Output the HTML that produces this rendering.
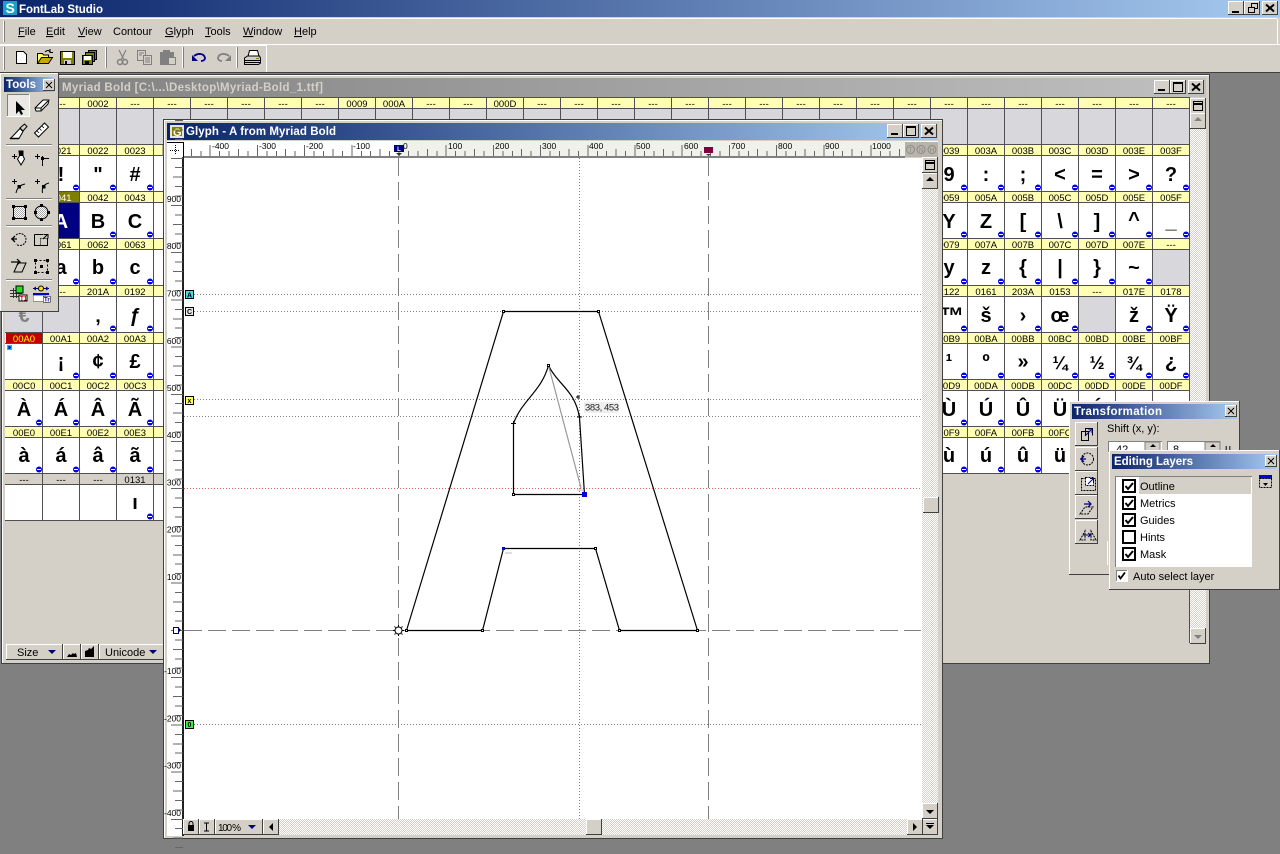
<!DOCTYPE html>
<html><head><meta charset="utf-8"><title>FontLab Studio</title>
<style>
html,body{margin:0;padding:0;background:#808080;width:1280px;height:854px;overflow:hidden}
svg{display:block;font-family:"Liberation Sans",sans-serif}
.c{shape-rendering:crispEdges}
.h text{font-size:9.5px;text-anchor:middle;fill:#000}
.g text{font-size:20px;font-weight:700;text-anchor:middle;fill:#000}
.r text{font-size:8.5px;fill:#000}
.ve text{text-anchor:end}
.m text{font-size:11px;fill:#000}
.t{font-size:11.5px;font-weight:700;fill:#fff}
.i{fill:none;stroke:#000;stroke-width:1}
</style></head><body>
<svg width="1280" height="854" viewBox="0 0 1280 854" xmlns="http://www.w3.org/2000/svg">
<defs>
<linearGradient id="ga"><stop offset="0" stop-color="#0a246a"/><stop offset="1" stop-color="#a6caf0"/></linearGradient>
<linearGradient id="gi"><stop offset="0" stop-color="#808080"/><stop offset="1" stop-color="#c0c0c0"/></linearGradient>
<pattern id="ck" width="2" height="2" patternUnits="userSpaceOnUse"><rect width="2" height="2" fill="#d4d0c8"/><rect width="1" height="1" fill="#fff"/><rect x="1" y="1" width="1" height="1" fill="#fff"/></pattern>
<pattern id="ng" width="2" height="2" patternUnits="userSpaceOnUse"><rect width="2" height="2" fill="#fff"/><rect width="1" height="1" fill="#aaa"/><rect x="1" y="1" width="1" height="1" fill="#aaa"/></pattern>
<g id="m"><circle cx="0" cy="0" r="3" fill="#0000e8"/><rect x="-2" y="-.5" width="4" height="1" fill="#fff"/></g>
<g id="ml"><use href="#m" x="76"/><use href="#m" x="113"/><use href="#m" x="150"/></g>
<g id="mr"><use href="#m" x="964"/><use href="#m" x="1001"/><use href="#m" x="1038"/><use href="#m" x="1075"/><use href="#m" x="1112"/><use href="#m" x="1149"/></g>
<g id="b15" class="c"><rect width="16" height="14" fill="#404040"/><rect width="15" height="13" fill="#fff"/><rect x="1" y="1" width="14" height="12" fill="#d4d0c8"/></g>
<g id="b16" class="c"><rect width="16" height="16" fill="#404040"/><rect width="15" height="15" fill="#fff"/><rect x="1" y="1" width="14" height="14" fill="#d4d0c8"/></g>
<g id="b23" class="c"><rect width="23" height="24" fill="#404040"/><rect width="22" height="23" fill="#fff"/><rect x="1" y="1" width="21" height="22" fill="#d4d0c8"/></g>
<g id="b11" class="c"><rect width="12" height="12" fill="#404040"/><rect width="11" height="11" fill="#fff"/><rect x="1" y="1" width="10" height="10" fill="#d4d0c8"/><path d="M3 3l6 6M9 3l-6 6" stroke="#000" fill="none" shape-rendering="auto"/></g>
<path id="xc" d="M-4-3.500L4 3.500M4-3.500L-4 3.500" stroke="#000" stroke-width="2" fill="none"/>
<path id="t5h" d="M.5 145V156M10 151V156M19.400 151V156M28.800 149V156M38.300 151V156" stroke="#666" fill="none"/>
<path id="t5v" d="M171 .5H183M175-9H183M175-18.400H183M173-27.800H183M175-37.300H183" stroke="#666" fill="none"/>
<g id="chk"><rect x="1" y="1" width="12" height="12" fill="#fff" stroke="#000" stroke-width="2"/><path d="M3.500 7l2.500 3 5-6" fill="none" stroke="#000" stroke-width="2"/></g>
<rect id="nd" x="-1" y="-1" width="2" height="2" fill="#fff" stroke="#000"/>
</defs>

<!-- app background -->
<rect width="1280" height="854" fill="#808080"/>
<rect width="1280" height="73" fill="#d4d0c8"/>
<rect y="72" width="1280" height="1" fill="#404040" class="c"/>
<rect width="1280" height="17" fill="url(#ga)"/>
<rect x="3" y="1" width="14" height="14" fill="#1a9fc8"/>
<text x="5.500" y="13" font-size="14" font-weight="700" fill="#fff">S</text>
<text x="19" y="13" class="t" font-size="12" textLength="84">FontLab Studio</text>
<use href="#b15" x="1228" y="1"/><use href="#b15" x="1244" y="1"/><use href="#b15" x="1262" y="1"/>
<rect x="1232" y="11" width="7" height="2" fill="#000"/>
<path d="M1248.500 7.500h6v5h-6zM1251.500 7V3.500h6v5h-3" fill="none" stroke="#000" class="c"/>
<use href="#xc" x="1270" y="8"/>

<!-- menu bar -->
<path class="c" d="M0 18.500H1277M1277.500 19V44.500H0" stroke="#fff" fill="none"/>
<path class="c" d="M3.500 21V42M0 44.500H1280" stroke="#fff" fill="none"/><rect x="4" y="21" width="1" height="21" fill="#808080" class="c"/>
<g class="m">
<text x="18" y="35"><tspan text-decoration="underline">F</tspan>ile</text>
<text x="46" y="35"><tspan text-decoration="underline">E</tspan>dit</text>
<text x="78" y="35"><tspan text-decoration="underline">V</tspan>iew</text>
<text x="113" y="35">Contour</text>
<text x="165" y="35"><tspan text-decoration="underline">G</tspan>lyph</text>
<text x="205" y="35"><tspan text-decoration="underline">T</tspan>ools</text>
<text x="243" y="35"><tspan text-decoration="underline">W</tspan>indow</text>
<text x="294" y="35"><tspan text-decoration="underline">H</tspan>elp</text>
</g>

<!-- toolbar -->
<path class="c" d="M0 45.500H266.500V72" stroke="#fff" fill="none"/>
<path class="c" d="M3.500 47V70M105.500 47V68M182.500 47V68M236.500 47V68" stroke="#fff" fill="none"/>
<path class="c" d="M4.500 47V70M106.500 47V68M183.500 47V68M237.500 47V68" stroke="#808080" fill="none"/>
<path d="M16.500 51.500h7l3 3v9h-10z" fill="#fff" stroke="#000"/>
<path d="M37.500 63.500v-10h5l1 1.500h5v2" fill="#ff6" stroke="#000"/><path d="M37.500 63.500l4-6h11l-4 6z" fill="#c8a800" stroke="#000"/><path d="M45 52c2-2 4-2 5 0M50 49v3.500h3" fill="none" stroke="#000"/>
<g class="c"><rect x="60.500" y="51.500" width="14" height="13" fill="#808000" stroke="#000"/><rect x="63" y="52" width="9" height="6" fill="#fff"/><rect x="64" y="60" width="7" height="4" fill="#d4d0c8"/><rect x="65" y="61" width="2" height="3" fill="#000"/>
<rect x="88.500" y="50.500" width="8" height="9" fill="#808000" stroke="#000"/><rect x="85.500" y="52.500" width="9" height="9" fill="#808000" stroke="#000"/><rect x="82.500" y="55.500" width="10" height="9" fill="#808000" stroke="#000"/><rect x="84" y="56" width="7" height="4" fill="#fff"/><rect x="85" y="61" width="4" height="3" fill="#000"/></g>
<path d="M119 50l5 10M126 50l-5 10" stroke="#808080" stroke-width="1.200" fill="none"/><circle cx="120" cy="62" r="2.500" fill="none" stroke="#808080" stroke-width="1.500"/><circle cx="125" cy="62" r="2.500" fill="none" stroke="#808080" stroke-width="1.500"/>
<g class="c" stroke="#808080" fill="#d4d0c8"><rect x="137.500" y="50.500" width="8" height="10"/><rect x="143.500" y="55.500" width="8" height="9"/><path d="M139 53h5M139 55h3M145 58h5M145 60h5M145 62h5" fill="none"/></g>
<g class="c"><rect x="160.500" y="52.500" width="13" height="12" fill="#808080" stroke="#808080"/><rect x="163" y="50" width="7" height="3" fill="#808080"/><rect x="168.500" y="57.500" width="7" height="7" fill="#d4d0c8" stroke="#808080"/></g>
<path d="M194 56c4-3 10-3 11 2 0 2-2 3-4 3" fill="none" stroke="#000080" stroke-width="1.800"/><path d="M192 55v6h6z" fill="#000080"/>
<path d="M229 56c-4-3-10-3-11 2 0 2 2 3 4 3" fill="none" stroke="#808080" stroke-width="1.800"/><path d="M231 55v6h-6z" fill="#808080"/>
<g><path d="M249.500 50.500h8l1.500 6h-11z" fill="#fff" stroke="#000"/><path d="M244.500 58l3-2h12l1 2v5l-2 1.500h-14z" fill="#d4d0c8" stroke="#000"/><path d="M245 60.500h15M245 62.500h15" stroke="#000"/><rect x="256" y="58" width="3" height="1" fill="#808000"/></g>

<!-- FONT WINDOW -->
<rect x="1" y="74" width="1209" height="590" fill="#404040" class="c"/>
<rect x="2" y="75" width="1207" height="588" fill="#fff" class="c"/>
<rect x="3" y="76" width="1206" height="587" fill="#d4d0c8" class="c"/>
<rect x="1" y="663" width="1209" height="1" fill="#404040" class="c"/>
<rect x="5" y="78" width="1201" height="19" fill="url(#gi)"/>
<text x="62" y="91" class="t" font-size="12" style="fill:#d4d0c8" textLength="261">Myriad Bold [C:\...\Desktop\Myriad-Bold_1.ttf]</text>
<use href="#b15" x="1154" y="80"/><use href="#b15" x="1170" y="80"/><use href="#b15" x="1188" y="80"/>
<rect x="1158" y="89" width="7" height="2" fill="#000" class="c"/>
<rect x="1173.500" y="82.500" width="9" height="9" fill="none" stroke="#000" class="c"/><rect x="1173" y="82" width="10" height="2" class="c"/>
<use href="#xc" x="1196" y="87"/>

<!-- grid fills -->
<g class="c">
<rect x="5" y="97" width="1185" height="377" fill="#fff"/>
<rect x="5" y="474" width="185" height="47" fill="#fff"/>
<rect x="5" y="98" width="1185" height="10" fill="#ffffb4"/>
<rect x="5" y="145" width="1185" height="10" fill="#ffffb4"/>
<rect x="5" y="192" width="1185" height="10" fill="#ffffb4"/>
<rect x="5" y="239" width="1185" height="10" fill="#ffffb4"/>
<rect x="5" y="286" width="1185" height="10" fill="#ffffb4"/>
<rect x="5" y="333" width="1185" height="10" fill="#ffffb4"/>
<rect x="5" y="380" width="1185" height="10" fill="#ffffb4"/>
<rect x="5" y="427" width="1185" height="10" fill="#ffffb4"/>
<rect x="5" y="474" width="185" height="10" fill="#d4d0c8"/>
<rect x="5" y="109" width="1185" height="35" fill="#d8d8dc"/>
<rect x="5" y="296" width="74" height="36" fill="#d8d8dc"/>
<rect x="1079" y="296" width="36" height="36" fill="#d8d8dc"/>
<rect x="1153" y="249" width="36" height="36" fill="#d8d8dc"/>
<rect x="43" y="203" width="36" height="35" fill="#000080"/>
<rect x="43" y="192" width="36" height="10" fill="#808000"/>
<rect x="6" y="333" width="36" height="10" fill="#c00000"/>
<rect x="7" y="345" width="5" height="5" fill="#00c8ff"/>
<path d="M8.500 346v3h1.500l1-1.500-1-1.500z" fill="#0000c0"/>
<path stroke="#505050" fill="none" d="M5 97.500H1190M5 108.500H1190M5 144.500H1190M5 155.500H1190M5 191.500H1190M5 202.500H1190M5 238.500H1190M5 249.500H1190M5 285.500H1190M5 296.500H1190M5 332.500H1190M5 343.500H1190M5 379.500H1190M5 390.500H1190M5 426.500H1190M5 437.500H1190M5 473.500H190M5 484.500H190M5 520.500H190M930 473.500H1190
M42.500 97V521M79.500 97V521M116.500 97V521M153.500 97V521M190.500 97V521M227.500 97V144M264.500 97V144M301.500 97V144M338.500 97V144M375.500 97V144M412.500 97V144M449.500 97V144M486.500 97V144M523.500 97V144M560.500 97V144M597.500 97V144M634.500 97V144M671.500 97V144M708.500 97V144M745.500 97V144M782.500 97V144M819.500 97V144M856.500 97V144M893.500 97V144M930.500 97V474M967.500 97V474M1004.500 97V474M1041.500 97V474M1078.500 97V474M1115.500 97V474M1152.500 97V474M1189.500 97V474"/>
</g>
<rect x="190" y="474" width="740" height="48" fill="#d4d0c8" class="c"/>
<rect x="967" y="474" width="240" height="60" fill="#d4d0c8" class="c"/>
<rect x="1189" y="473" width="1" height="1" fill="#505050" class="c"/>

<!-- header labels -->
<g class="h">
<text x="61" y="107">---</text><text x="98" y="107">0002</text><text x="135" y="107">---</text><text x="172" y="107">---</text><text x="209" y="107">---</text><text x="246" y="107">---</text><text x="283" y="107">---</text><text x="320" y="107">---</text><text x="357" y="107">0009</text><text x="394" y="107">000A</text><text x="431" y="107">---</text><text x="468" y="107">---</text><text x="505" y="107">000D</text><text x="542" y="107">---</text><text x="579" y="107">---</text><text x="616" y="107">---</text><text x="653" y="107">---</text><text x="690" y="107">---</text><text x="727" y="107">---</text><text x="764" y="107">---</text><text x="801" y="107">---</text><text x="838" y="107">---</text><text x="875" y="107">---</text><text x="912" y="107">---</text><text x="949" y="107">---</text><text x="986" y="107">---</text><text x="1023" y="107">---</text><text x="1060" y="107">---</text><text x="1097" y="107">---</text><text x="1134" y="107">---</text><text x="1171" y="107">---</text>
<text x="61" y="154">0021</text><text x="98" y="154">0022</text><text x="135" y="154">0023</text><text x="949" y="154">0039</text><text x="986" y="154">003A</text><text x="1023" y="154">003B</text><text x="1060" y="154">003C</text><text x="1097" y="154">003D</text><text x="1134" y="154">003E</text><text x="1171" y="154">003F</text>
<text x="61" y="201" style="fill:#fff">0041</text><text x="98" y="201">0042</text><text x="135" y="201">0043</text><text x="949" y="201">0059</text><text x="986" y="201">005A</text><text x="1023" y="201">005B</text><text x="1060" y="201">005C</text><text x="1097" y="201">005D</text><text x="1134" y="201">005E</text><text x="1171" y="201">005F</text>
<text x="61" y="248">0061</text><text x="98" y="248">0062</text><text x="135" y="248">0063</text><text x="949" y="248">0079</text><text x="986" y="248">007A</text><text x="1023" y="248">007B</text><text x="1060" y="248">007C</text><text x="1097" y="248">007D</text><text x="1134" y="248">007E</text><text x="1171" y="248">---</text>
<text x="61" y="295">---</text><text x="98" y="295">201A</text><text x="135" y="295">0192</text><text x="949" y="295">2122</text><text x="986" y="295">0161</text><text x="1023" y="295">203A</text><text x="1060" y="295">0153</text><text x="1097" y="295">---</text><text x="1134" y="295">017E</text><text x="1171" y="295">0178</text>
<text x="24" y="342" style="fill:#ffff00">00A0</text><text x="61" y="342">00A1</text><text x="98" y="342">00A2</text><text x="135" y="342">00A3</text><text x="949" y="342">00B9</text><text x="986" y="342">00BA</text><text x="1023" y="342">00BB</text><text x="1060" y="342">00BC</text><text x="1097" y="342">00BD</text><text x="1134" y="342">00BE</text><text x="1171" y="342">00BF</text>
<text x="24" y="389">00C0</text><text x="61" y="389">00C1</text><text x="98" y="389">00C2</text><text x="135" y="389">00C3</text><text x="949" y="389">00D9</text><text x="986" y="389">00DA</text><text x="1023" y="389">00DB</text><text x="1060" y="389">00DC</text><text x="1097" y="389">00DD</text><text x="1134" y="389">00DE</text><text x="1171" y="389">00DF</text>
<text x="24" y="436">00E0</text><text x="61" y="436">00E1</text><text x="98" y="436">00E2</text><text x="135" y="436">00E3</text><text x="949" y="436">00F9</text><text x="986" y="436">00FA</text><text x="1023" y="436">00FB</text><text x="1060" y="436">00FC</text>
<text x="24" y="483">---</text><text x="61" y="483">---</text><text x="98" y="483">---</text><text x="135" y="483">0131</text>
</g>

<!-- glyphs -->
<g class="g">
<text x="61" y="181">!</text><text x="98" y="181">"</text><text x="135" y="181">#</text><text x="949" y="181">9</text><text x="986" y="181">:</text><text x="1023" y="181">;</text><text x="1060" y="181">&lt;</text><text x="1097" y="181">=</text><text x="1134" y="181">&gt;</text><text x="1171" y="181">?</text>
<text x="61" y="228" style="fill:#fff">A</text><text x="98" y="228">B</text><text x="135" y="228">C</text><text x="949" y="228">Y</text><text x="986" y="228">Z</text><text x="1023" y="228">[</text><text x="1060" y="228">\</text><text x="1097" y="228">]</text><text x="1134" y="226">^</text><text x="1171" y="228">_</text>
<text x="61" y="274">a</text><text x="98" y="274">b</text><text x="135" y="274">c</text><text x="949" y="274">y</text><text x="986" y="274">z</text><text x="1023" y="274">{</text><text x="1060" y="274">|</text><text x="1097" y="274">}</text><text x="1134" y="274">~</text>
<text x="24" y="322" style="fill:#808080">€</text><text x="98" y="322">‚</text><text x="135" y="322">ƒ</text><text x="952" y="324" style="font-size:24px">™</text><text x="986" y="322">š</text><text x="1023" y="322">›</text><text x="1060" y="322">œ</text><text x="1134" y="322">ž</text><text x="1171" y="322">Ÿ</text>
<text x="61" y="368">¡</text><text x="98" y="368">¢</text><text x="135" y="368">£</text><text x="949" y="368">¹</text><text x="986" y="368">º</text><text x="1023" y="368">»</text><text x="1060" y="369" style="font-size:18px">¼</text><text x="1097" y="369" style="font-size:18px">½</text><text x="1134" y="369" style="font-size:18px">¾</text><text x="1171" y="368">¿</text>
<text x="24" y="416">À</text><text x="61" y="416">Á</text><text x="98" y="416">Â</text><text x="135" y="416">Ã</text><text x="949" y="416">Ù</text><text x="986" y="416">Ú</text><text x="1023" y="416">Û</text><text x="1060" y="416">Ü</text><text x="1097" y="416">Ý</text><text x="1171" y="416">ß</text>
<text x="24" y="462">à</text><text x="61" y="462">á</text><text x="98" y="462">â</text><text x="135" y="462">ã</text><text x="949" y="462">ù</text><text x="986" y="462">ú</text><text x="1023" y="462">û</text><text x="1060" y="462">ü</text>
<text x="135" y="509">ı</text>
</g>

<!-- markers -->
<use href="#ml" y="187.500"/><use href="#mr" y="187.500"/><use href="#m" x="1186" y="187.500"/>
<use href="#m" x="113" y="234.500"/><use href="#m" x="150" y="234.500"/><use href="#mr" y="234.500"/><use href="#m" x="1186" y="234.500"/>
<use href="#ml" y="281.500"/><use href="#mr" y="281.500"/>
<use href="#m" x="113" y="328.500"/><use href="#m" x="150" y="328.500"/><use href="#m" x="964" y="328.500"/><use href="#m" x="1001" y="328.500"/><use href="#m" x="1038" y="328.500"/><use href="#m" x="1075" y="328.500"/><use href="#m" x="1149" y="328.500"/><use href="#m" x="1186" y="328.500"/>
<use href="#ml" y="375.500"/><use href="#mr" y="375.500"/><use href="#m" x="1186" y="375.500"/>
<use href="#m" x="39" y="422.500"/><use href="#ml" y="422.500"/><use href="#mr" y="422.500"/>
<use href="#m" x="39" y="469.500"/><use href="#ml" y="469.500"/><use href="#m" x="964" y="469.500"/><use href="#m" x="1001" y="469.500"/><use href="#m" x="1038" y="469.500"/>
<use href="#m" x="150" y="516.500"/>

<!-- font window scrollbar -->
<rect x="1190" y="98" width="16" height="545" fill="url(#ck)" class="c"/>
<rect x="1189" y="97" width="1" height="546" fill="#505050" class="c"/>
<use href="#b16" x="1190" y="98"/><rect x="1193.500" y="101.500" width="9" height="9" fill="none" stroke="#000" class="c"/><rect x="1194" y="103" width="8" height="2" class="c"/>
<use href="#b16" x="1190" y="113"/><path d="M1198 117l-4 4h8z" fill="#808080"/>
<use href="#b16" x="1190" y="628"/><path d="M1198 639l-4-4h8z" fill="#808080"/>

<!-- font window bottom bar -->
<g class="c">
<rect x="6" y="644" width="57" height="16" fill="#404040"/><rect x="6" y="644" width="56" height="15" fill="#fff"/><rect x="7" y="645" width="55" height="14" fill="#d4d0c8"/>
<rect x="63" y="644" width="18" height="16" fill="#404040"/><rect x="63" y="644" width="17" height="15" fill="#fff"/><rect x="64" y="645" width="16" height="14" fill="#d4d0c8"/>
<rect x="81" y="644" width="18" height="16" fill="#404040"/><rect x="81" y="644" width="17" height="15" fill="#fff"/><rect x="82" y="645" width="16" height="14" fill="#d4d0c8"/>
<rect x="99" y="644" width="66" height="16" fill="#404040"/><rect x="99" y="644" width="65" height="15" fill="#fff"/><rect x="100" y="645" width="64" height="14" fill="#d4d0c8"/>
</g>
<text x="17" y="656" font-size="11" fill="#000">Size</text><path d="M48 650h8l-4 4z" fill="#000080"/>
<path d="M67 657l2-3 2 1 2-2 1 1 2-1 1 4z" fill="#000"/><path d="M85 657v-6l3-1 1-2 2 1 3-3v11z" fill="#000"/>
<text x="105" y="656" font-size="11" fill="#000">Unicode</text><path d="M149 650h8l-4 4z" fill="#000080"/>

<!-- GLYPH WINDOW -->
<rect x="163" y="119" width="780" height="720" fill="#404040" class="c"/>
<rect x="164" y="120" width="778" height="718" fill="#fff" class="c"/>
<rect x="165" y="121" width="777" height="717" fill="#d4d0c8" class="c"/>
<rect x="167" y="123" width="771" height="17" fill="url(#ga)"/>
<g class="c"><rect x="170" y="125" width="14" height="13" fill="#e8e4d8"/><rect x="172" y="127" width="10" height="9" fill="#808000"/></g>
<text x="173" y="136" font-size="11" font-weight="700" fill="#fff">G</text>
<text x="186" y="135" class="t" font-size="12" textLength="150">Glyph - A from Myriad Bold</text>
<use href="#b15" x="887" y="124"/><use href="#b15" x="903" y="124"/><use href="#b15" x="921" y="124"/>
<rect x="891" y="133" width="7" height="2" fill="#000" class="c"/>
<rect x="906.500" y="126.500" width="9" height="9" fill="none" stroke="#000" class="c"/><rect x="906" y="126" width="10" height="2" class="c"/>
<use href="#xc" x="929" y="131"/>

<!-- canvas & rulers -->
<rect x="184" y="158" width="738" height="661" fill="#fff" class="c"/>
<rect x="167" y="141" width="771" height="16" fill="#fff" class="c"/>
<rect x="399" y="141" width="506" height="15" fill="#f1f1ec" class="c"/>
<rect x="167" y="157" width="16" height="679" fill="#fff" class="c"/>
<rect x="183" y="156" width="722" height="2" fill="#808080" class="c"/>
<rect x="182" y="142" width="2" height="694" fill="#202020" class="c"/>
<g class="c">
<use href="#t5h" x="162.500"/><use href="#t5h" x="209.700"/><use href="#t5h" x="256.900"/><use href="#t5h" x="304.100"/><use href="#t5h" x="351.300"/><use href="#t5h" x="398.500"/><use href="#t5h" x="445.700"/><use href="#t5h" x="492.900"/><use href="#t5h" x="540.100"/><use href="#t5h" x="587.300"/><use href="#t5h" x="634.500"/><use href="#t5h" x="681.700"/><use href="#t5h" x="728.900"/><use href="#t5h" x="776.100"/><use href="#t5h" x="823.300"/><use href="#t5h" x="870.500"/>
<use href="#t5v" y="158"/><use href="#t5v" y="205"/><use href="#t5v" y="252.200"/><use href="#t5v" y="299.400"/><use href="#t5v" y="346.600"/><use href="#t5v" y="393.800"/><use href="#t5v" y="441"/><use href="#t5v" y="488.200"/><use href="#t5v" y="535.400"/><use href="#t5v" y="582.600"/><use href="#t5v" y="630"/><use href="#t5v" y="677.200"/><use href="#t5v" y="724.400"/><use href="#t5v" y="771.600"/><use href="#t5v" y="818.800"/><use href="#t5v" y="866"/>
</g>
<rect x="167" y="142" width="16" height="15" fill="#fff" class="c"/>
<path class="c" d="M167 142.500H183.500V157" stroke="#000" fill="none"/>
<path class="c" d="M175.500 145V155M170 150.500H180" stroke="#000" stroke-dasharray="1 1" fill="none"/>
<g class="r">
<text x="212" y="149">-400</text><text x="259" y="149">-300</text><text x="306" y="149">-200</text><text x="353" y="149">-100</text><text x="403" y="149">0</text><text x="448" y="149">100</text><text x="495" y="149">200</text><text x="542" y="149">300</text><text x="589" y="149">400</text><text x="636" y="149">500</text><text x="684" y="149">600</text><text x="731" y="149">700</text><text x="778" y="149">800</text><text x="825" y="149">900</text><text x="872" y="149">1000</text>
</g>
<g class="r ve">
<text x="181" y="202">900</text><text x="181" y="249">800</text><text x="181" y="296.500">700</text><text x="181" y="344">600</text><text x="181" y="391">500</text><text x="181" y="438">400</text><text x="181" y="485.500">300</text><text x="181" y="532.500">200</text><text x="181" y="580">100</text><text x="181" y="674">-100</text><text x="181" y="721.500">-200</text><text x="181" y="768.500">-300</text><text x="181" y="816">-400</text>
</g>
<rect x="905" y="142" width="33" height="15" fill="#b8b4ac" class="c"/>
<g fill="none" stroke="#8a8a82"><circle cx="910.500" cy="149.500" r="4"/><circle cx="921" cy="149.500" r="4"/><circle cx="932" cy="149.500" r="4"/></g>
<g font-size="6" fill="#8a8a82" text-anchor="middle"><text x="910.500" y="152">T</text><text x="921" y="152">N</text><text x="932" y="152">H</text></g>
<rect x="394" y="145" width="10" height="7" fill="#000080" class="c"/><text x="399" y="151" font-size="6" font-weight="700" fill="#fff" text-anchor="middle">L</text><path d="M396 153h6l-3 3z" fill="#333"/>
<rect x="704" y="147" width="9" height="6" fill="#800040" class="c"/><path d="M706 154h5l-2.500 2z" fill="#333"/>

<!-- guides -->
<g class="c" fill="none" stroke="#808080" stroke-dasharray="1 2">
<path d="M194 294.500H921M194 311.500H921M194 399.500H921M184 416.500H921M194 724.500H921M579.500 158V819"/>
<path d="M184 488.500H921" stroke="#e06060"/>
</g>
<path class="c" d="M398.500 158V819M708.500 158V819M184 630.500H921" stroke="#808080" stroke-dasharray="18 6" fill="none"/>

<!-- contours -->
<path d="M406.500 630.500L503.500 311.500H598.500L697.500 630.500H619.500L595.500 548.500H503.500L482.500 630.500Z" fill="none" stroke="#000" stroke-width="1.200"/>
<path d="M548.500 365.500C541 392 522 400 513.500 423.500V494.500H584.500L579.500 417.500C575 390 558 385 548.500 365.500Z" fill="none" stroke="#000" stroke-width="1.200"/>
<path d="M548.500 365.500L581 488" stroke="#999" stroke-width="1.200" fill="none"/>
<path d="M577 490h6" stroke="#bbb" fill="none"/>
<path d="M505 553h7" stroke="#bbb" fill="none"/>
<path d="M576 397h4M578 395v4M577 417h5M579.500 414.500v5M511 423.500h5M513.500 421v5" stroke="#000" fill="none" class="c"/>
<g class="c">
<use href="#nd" x="503.500" y="311.500"/><use href="#nd" x="598.500" y="311.500"/><use href="#nd" x="548.500" y="365.500"/><use href="#nd" x="513.500" y="494.500"/><use href="#nd" x="406.500" y="630.500"/><use href="#nd" x="482.500" y="630.500"/><use href="#nd" x="619.500" y="630.500"/><use href="#nd" x="697.500" y="630.500"/><use href="#nd" x="595.500" y="548.500"/>
<rect x="502" y="547" width="3" height="3" fill="#0000e0"/><rect x="582" y="492" width="5" height="5" fill="#0000e0"/>
</g>
<rect x="584" y="402" width="35" height="11" fill="#eee"/>
<text x="585" y="410.500" font-size="9.500" fill="#222" textLength="34">383, 453</text>
<circle cx="398.500" cy="630.500" r="3.500" fill="#fff" stroke="#000"/><path d="M393 630.500h2M402 630.500h2M398.500 625v2M398.500 634v2M394.500 626.500l1 1M402.500 626.500l-1 1M394.500 634.500l1-1M402.500 634.500l-1-1" stroke="#000" fill="none"/>

<!-- guide markers -->
<g class="c">
<rect x="185.500" y="290.500" width="8" height="8" fill="#40e0e0" stroke="#000"/>
<rect x="185.500" y="307.500" width="8" height="8" fill="#e8e8e8" stroke="#000"/>
<rect x="185.500" y="396.500" width="8" height="8" fill="#ffff60" stroke="#000"/>
<rect x="185.500" y="720.500" width="8" height="8" fill="#40f040" stroke="#000"/>
<rect x="173.500" y="627.500" width="5" height="6" fill="#fff" stroke="#000080"/>
</g>
<path d="M179 628l2 2-2 2z" fill="#000"/>
<g font-size="7" font-weight="700" fill="#000" text-anchor="middle"><text x="189.500" y="297.500">A</text><text x="189.500" y="314">C</text><text x="189.500" y="403">x</text><text x="189.500" y="727">0</text></g>

<!-- glyph window scrollbars -->
<rect x="922" y="157" width="16" height="662" fill="url(#ck)" class="c"/>
<use href="#b16" x="922" y="157"/><rect x="925.500" y="160.500" width="9" height="9" fill="none" stroke="#000" class="c"/><rect x="926" y="162" width="8" height="2" class="c"/>
<use href="#b16" x="922" y="173"/><path d="M930 177l-4 4h8z" fill="#000"/>
<use href="#b16" x="923" y="497"/>
<use href="#b16" x="922" y="803"/><path d="M930 814l-4-4h8z" fill="#000"/>
<use href="#b16" x="922" y="819"/><path d="M930 829l-4-4h8z" fill="#000"/><rect x="926" y="823" width="8" height="1" fill="#000"/>
<rect x="278" y="819" width="630" height="16" fill="url(#ck)" class="c"/>
<use href="#b16" x="183" y="819"/><use href="#b16" x="199" y="819"/>
<g class="c"><rect x="215" y="819" width="48" height="16" fill="#404040"/><rect x="215" y="819" width="47" height="15" fill="#fff"/><rect x="216" y="820" width="46" height="14" fill="#d4d0c8"/></g>
<use href="#b16" x="263" y="819"/>
<use href="#b16" x="586" y="819"/>
<use href="#b16" x="907" y="819"/>
<path d="M188 825h6v6h-6z" fill="#000"/><path d="M189 825v-1.500a2 2 0 0 1 4 0V825" fill="none" stroke="#000"/>
<path d="M204 823h5M204 831h5M206.500 823v8" fill="none" stroke="#000" class="c"/>
<text x="218" y="831" font-size="10" fill="#000" textLength="23">100 %</text><path d="M248 825h8l-4 4z" fill="#000080"/>
<path d="M273 823v8l-4-4z" fill="#000"/><path d="M913 823v8l4-4z" fill="#000"/>

<!-- TOOLS PALETTE -->
<rect x="0" y="73" width="59" height="239" fill="#404040" class="c"/>
<rect x="0" y="73" width="58" height="238" fill="#fff" class="c"/>
<rect x="1" y="74" width="57" height="237" fill="#d4d0c8" class="c"/>
<rect x="4" y="77" width="50" height="15" fill="url(#ga)"/>
<text x="6" y="88" class="t" font-size="12" textLength="30">Tools</text>
<use href="#b11" x="43" y="79"/>
<path class="c" d="M6 145.500H52M6 199.500H52M6 226.500H52M6 280.500H52" stroke="#fff" fill="none"/>
<path class="c" d="M6 144.500H52M6 198.500H52M6 225.500H52M6 279.500H52" stroke="#808080" fill="none"/>
<!-- arrow -->
<g class="c"><rect x="7" y="94" width="23" height="23" fill="#fff"/><rect x="7" y="94" width="22" height="22" fill="#808080"/><rect x="8" y="95" width="21" height="21" fill="#ebe9e5"/></g>
<path d="M16 101v13l3-3 2 4 2-1-2-4h4z" fill="#000"/>
<!-- eraser -->
<path d="M35 108l8-8h6l-1 4-7 7h-5z" fill="#fff" stroke="#000"/><path d="M35 108h6l7-7M41 108v3" fill="none" stroke="#000"/>
<!-- knife -->
<path d="M10.500 138.500L20 128.500L23 131.500L19 138.500Z" fill="#fff" stroke="#000"/><path d="M20 128L24.500 124L27 126.500L23 131Z" fill="none" stroke="#000"/><path d="M10 138.500h9" stroke="#000" stroke-width="1.500"/>
<!-- ruler -->
<path d="M34.500 133l10-10 4 4-10 10z" fill="#fff" stroke="#000"/><path d="M37 131l2 2M39.500 128.500l2 2M42 126l2 2" stroke="#000" stroke-width=".8" fill="none"/>
<!-- add node tools -->
<path d="M12 156.500h5M14.500 154v5M35 156.500h5M37.500 154v5" stroke="#000" fill="none" class="c"/>
<path d="M19 151h4v5l1.500 3-3.500 6-3.500-6 2-3z" fill="#fff" stroke="#000"/><rect x="19" y="151" width="4" height="5"/>
<path d="M42 158.500h7M42.500 156v10" stroke="#000" fill="none" class="c"/><rect x="41" y="157" width="3" height="3" class="c"/>
<path d="M12 181.500h5M14.500 179v5M35 181.500h5M37.500 179v5" stroke="#000" fill="none" class="c"/>
<path d="M16 193c1-5 4-8 9-9" fill="none" stroke="#000"/><rect x="17.500" y="185" width="3.500" height="3.500"/>
<path d="M42.500 193c-1-6 2-9 6.500-10" fill="none" stroke="#000"/><rect x="42" y="185" width="3.500" height="3.500"/>
<!-- rect / circle shapes -->
<g class="c"><rect x="13.500" y="206.500" width="12" height="12" fill="url(#ng)" stroke="#000"/><rect x="12" y="205" width="3" height="3"/><rect x="24" y="205" width="3" height="3"/><rect x="12" y="217" width="3" height="3"/><rect x="24" y="217" width="3" height="3"/></g>
<circle cx="41.500" cy="212.500" r="6.500" fill="url(#ng)" stroke="#000"/><g class="c"><rect x="40" y="204" width="3" height="3"/><rect x="40" y="218" width="3" height="3"/><rect x="34" y="211" width="3" height="3"/><rect x="47" y="211" width="3" height="3"/></g>
<!-- rotate / scale -->
<path d="M16 235a6 6 0 1 1 0 9" fill="none" stroke="#000" stroke-dasharray="2 1"/><path d="M11 239h6M15 236l-3 3 3 3" fill="none" stroke="#000" stroke-width="1.300"/>
<path class="c" d="M34.500 234.500h9M34.500 234.500v11h13v-7" fill="none" stroke="#000"/><path class="c" d="M40.500 238.500h7M40.500 238.500v7" fill="none" stroke="#000" stroke-dasharray="1 1"/><path d="M43 239l4-4M44 234.500h4v4" fill="none" stroke="#000"/>
<!-- skew / transform box -->
<path d="M14 272l4-9h8l-4 9z" fill="none" stroke="#000"/><path d="M11 262h8M17 259l3 3-3 3" fill="none" stroke="#000" stroke-width="1.200"/>
<rect x="35.500" y="260.500" width="12" height="12" fill="none" stroke="#000" stroke-dasharray="2 2" class="c"/><g class="c"><rect x="34" y="259" width="3" height="3"/><rect x="46" y="259" width="3" height="3"/><rect x="34" y="271" width="3" height="3"/><rect x="46" y="271" width="3" height="3"/><rect x="40" y="265" width="3" height="3"/></g>
<!-- T1 grid / metrics -->
<g class="c"><path d="M10 290.500h12M10 293.500h12M10 296.500h12M13.500 288v10M16.500 288v10" stroke="#333" fill="none"/><rect x="16" y="286" width="7" height="7" fill="#20e020" stroke="#000" stroke-width=".8"/><rect x="19" y="295" width="8" height="6" fill="#fff" stroke="#000"/></g>
<text x="20" y="300.500" font-size="6" font-weight="700" fill="#c00000">T1</text>
<path class="c" d="M33 288.500h16" stroke="#000080" fill="none"/><path d="M33 288.500l3-2v4zM49 288.500l-3-2v4z" fill="#000080"/><circle cx="41" cy="288.500" r="2.500" fill="#ffe000" stroke="#000"/>
<g class="c"><rect x="33" y="293" width="16" height="2" fill="#0000c0"/><rect x="33" y="295" width="12" height="6" fill="#fff" stroke="#555" stroke-width=".5"/><rect x="43" y="296" width="7" height="6" fill="#fff" stroke="#000" stroke-width=".5"/></g>
<text x="44" y="301.500" font-size="6" font-weight="700" fill="#0000a0">Tr</text>

<!-- TRANSFORMATION PANEL -->
<rect x="1069" y="401" width="171" height="174" fill="#404040" class="c"/>
<rect x="1069" y="401" width="170" height="173" fill="#fff" class="c"/>
<rect x="1070" y="402" width="169" height="172" fill="#d4d0c8" class="c"/>
<rect x="1072" y="404" width="165" height="15" fill="url(#ga)"/>
<text x="1074" y="415" class="t" font-size="12" textLength="88">Transformation</text>
<use href="#b11" x="1225" y="405"/>
<use href="#b23" x="1075" y="422"/><use href="#b23" x="1075" y="447"/><use href="#b23" x="1075" y="471"/><use href="#b23" x="1075" y="495"/><use href="#b23" x="1075" y="520"/>
<path class="c" d="M1081.500 431.500h7v9h-7zM1085.500 435.500v-7h7v7" fill="none" stroke="#000"/><path d="M1085 436l6-6M1088 429h4v4" stroke="#000080" fill="none"/>
<circle cx="1087.500" cy="459" r="6" fill="none" stroke="#000" stroke-dasharray="2 1"/><path d="M1080 459h6M1084 456l-3 3 3 3" fill="none" stroke="#000080" stroke-width="1.300"/>
<rect x="1081.500" y="478.500" width="14" height="12" fill="none" stroke="#000" stroke-dasharray="2 1" class="c"/><rect x="1085.500" y="477.500" width="8" height="8" fill="#fff" stroke="#000" stroke-dasharray="2 1" class="c"/><path d="M1088 484l5-5M1090 478.500h3.500v3.500" stroke="#000080" fill="none"/>
<path d="M1080 514l5-7h8l-5 7z" fill="none" stroke="#000" stroke-dasharray="2 1"/><path d="M1084 504h7M1088 501l3 3-3 3" stroke="#000080" fill="none" stroke-width="1.200"/>
<path d="M1080 540l5-9v9zM1096 540l-5-9v9z" fill="none" stroke="#000" stroke-dasharray="2 1"/><path d="M1083 535h7M1088 533l3 2-3 2" stroke="#000080" fill="none"/>
<text x="1107" y="432" font-size="11" fill="#000">Shift (x, y):</text>
<g class="c"><rect x="1108" y="441" width="54" height="12" fill="#fff"/><path d="M1108.500 452V441.500H1162" stroke="#808080" fill="none"/><rect x="1145" y="442" width="15" height="9" fill="#d4d0c8" stroke="#808080" stroke-width=".6"/>
<rect x="1167" y="441" width="53" height="12" fill="#fff"/><path d="M1167.500 452V441.500H1220" stroke="#808080" fill="none"/><rect x="1205" y="442" width="15" height="9" fill="#d4d0c8" stroke="#808080" stroke-width=".6"/></g>
<path d="M1150 447l3-3 3 3zM1210 447l3-3 3 3z" fill="#000"/>
<text x="1116" y="453" font-size="11" fill="#000">42</text><text x="1173" y="453" font-size="11" fill="#000">8</text><text x="1225" y="452" font-size="11" fill="#000">u</text>
<path class="c" d="M1107.500 541V565" stroke="#fff" fill="none"/>

<!-- EDITING LAYERS PANEL -->
<rect x="1109" y="450" width="171" height="140" fill="#404040" class="c"/>
<rect x="1109" y="450" width="170" height="139" fill="#fff" class="c"/>
<rect x="1110" y="451" width="169" height="138" fill="#d4d0c8" class="c"/>
<rect x="1112" y="454" width="165" height="15" fill="url(#ga)"/>
<text x="1114" y="465" class="t" font-size="12" textLength="79">Editing Layers</text>
<use href="#b11" x="1265" y="455"/>
<g class="c"><rect x="1115" y="476" width="137" height="91" fill="#808080"/><rect x="1116" y="477" width="136" height="90" fill="#fff"/><rect x="1139" y="477" width="112" height="17" fill="#d4d0c8"/></g>
<use href="#chk" x="1122" y="479"/><use href="#chk" x="1122" y="496"/><use href="#chk" x="1122" y="513"/>
<rect x="1123" y="531" width="12" height="12" fill="#fff" stroke="#000" stroke-width="2"/><use href="#chk" x="1122" y="547"/>
<g class="m"><text x="1140" y="490">Outline</text><text x="1140" y="507">Metrics</text><text x="1140" y="524">Guides</text><text x="1140" y="541">Hints</text><text x="1140" y="558">Mask</text><text x="1133" y="580">Auto select layer</text></g>
<g class="c"><rect x="1116" y="570" width="12" height="12" fill="#fff"/><path d="M1116.500 581V570.500H1127" stroke="#808080" fill="none"/></g>
<path d="M1118.500 575.500l2 3 4.500-6" fill="none" stroke="#000" stroke-width="1.800"/>
<g class="c"><rect x="1259" y="475" width="13" height="4" fill="#0000e0"/><rect x="1259.500" y="478.500" width="12" height="9" fill="#d4d0c8" stroke="#000" stroke-dasharray="2 1"/></g>
<path d="M1263 483h5l-2.500 3z" fill="#000"/>
</svg>
</body></html>
